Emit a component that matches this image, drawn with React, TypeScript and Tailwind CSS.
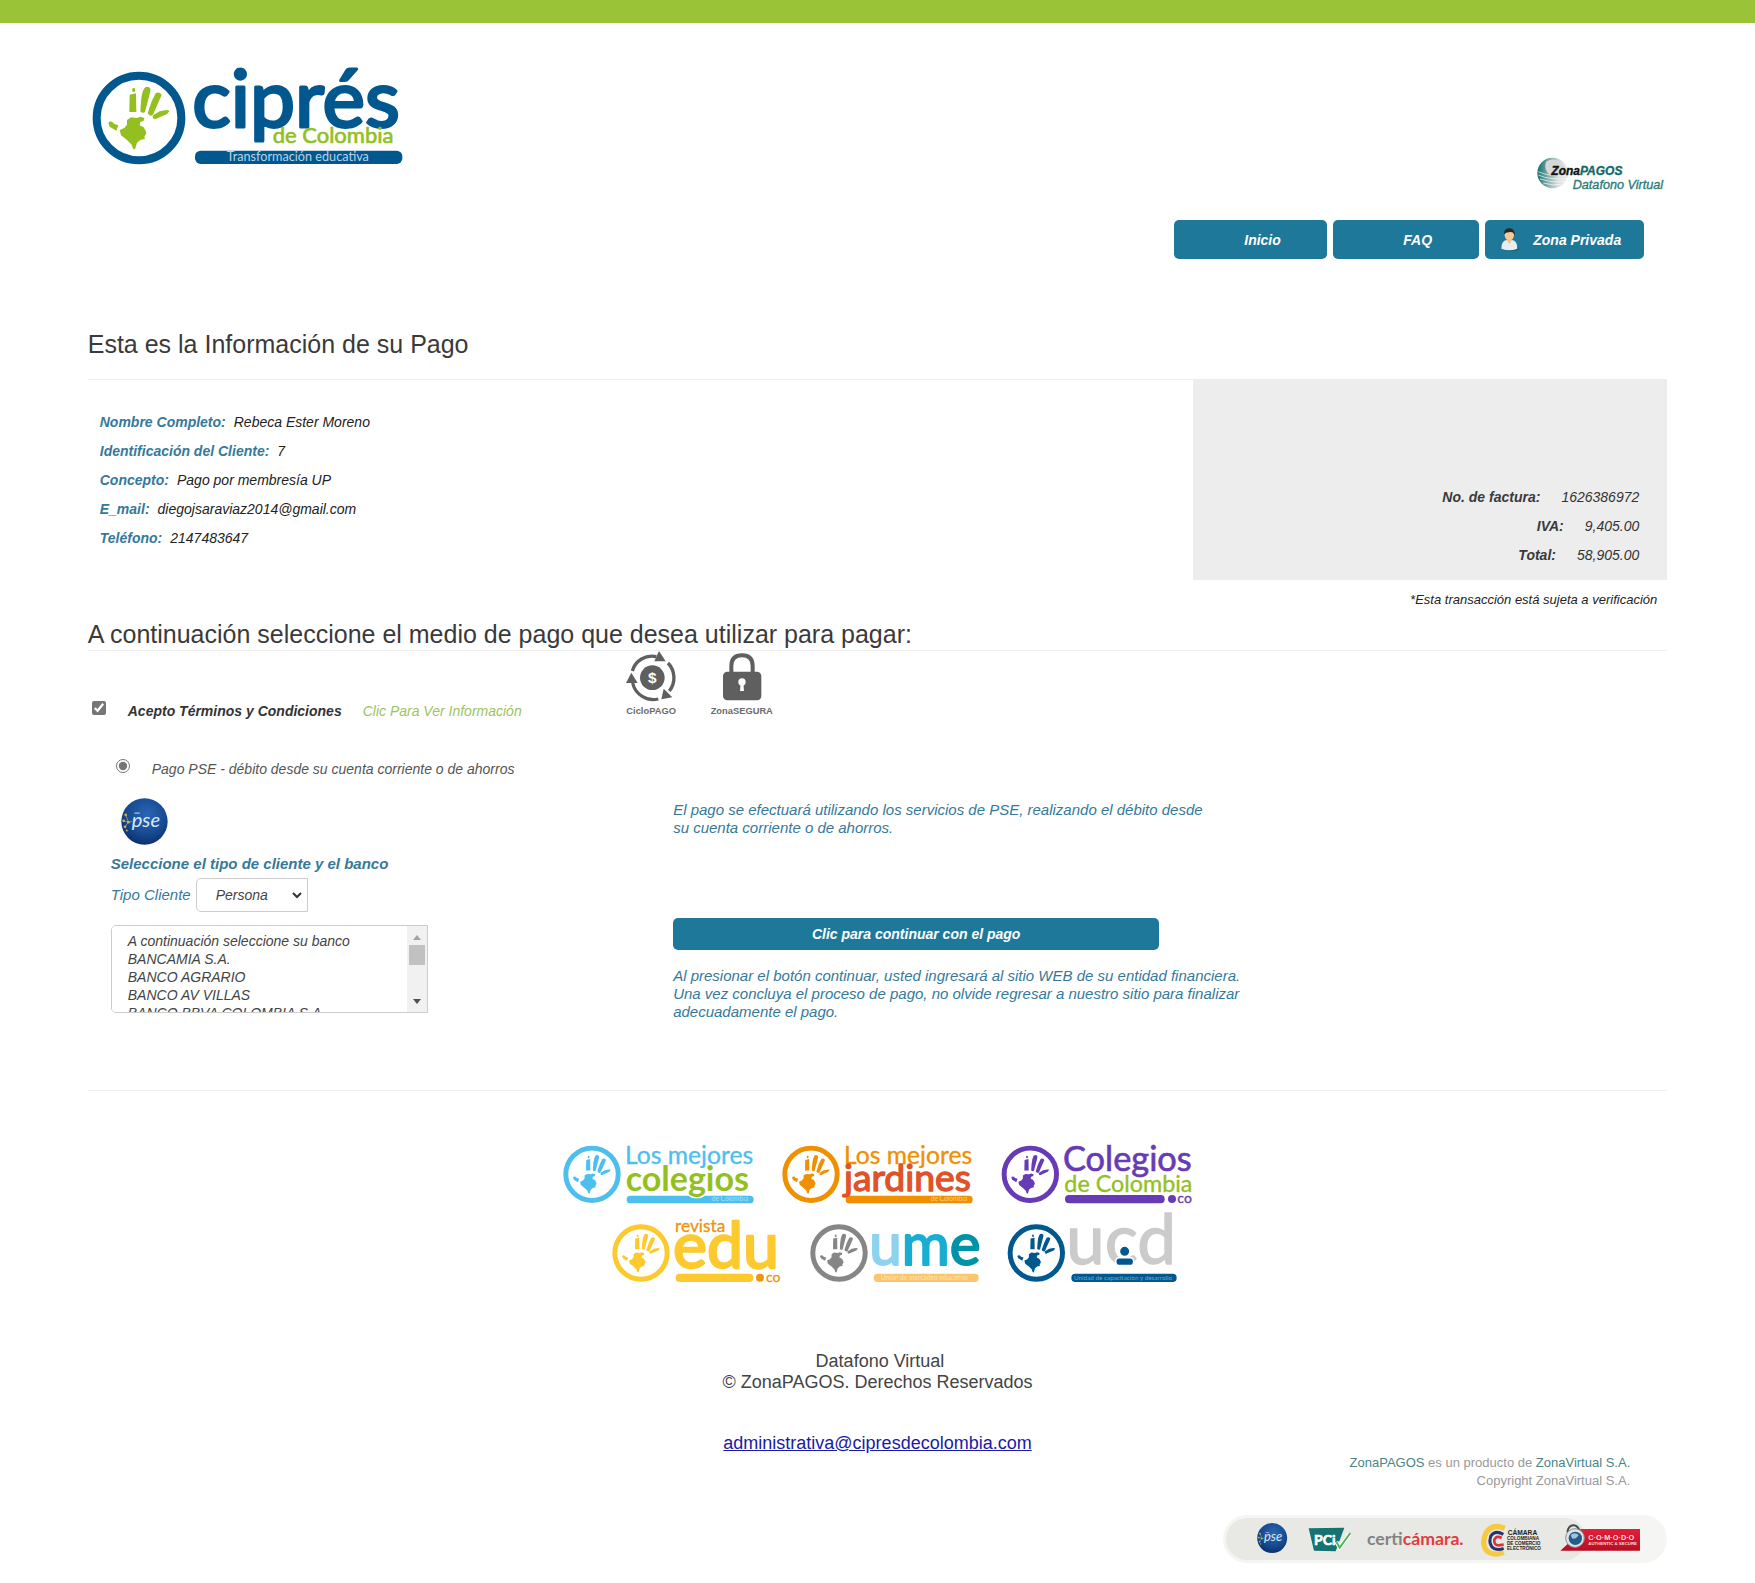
import React from "react";

const LOGO_FONT = "Lato, 'Open Sans', sans-serif";
const ARIAL = "'Liberation Sans', Arial, sans-serif";

/* Ring with an open hand whose palm is the map of Colombia, centred on (0,0), outer radius 139 */
function HandMark({ x, y, scale, ring, hand }: { x: number; y: number; scale: number; ring: string; hand: string }) {
  return (
    <g transform={`translate(${x} ${y}) scale(${scale})`}>
      <circle r="127" fill="none" stroke={ring} strokeWidth="24" />
      <g fill={hand}>
        <path d="M-28 -70 L-9 -74 L-8 -18 L-29 -18 Z" />
        <rect x="-20" y="-90" width="8" height="12" rx="3" />
        <path d="M15 -88 Q22 -98 33 -90 Q36 -86 33 -76 L18 -18 Q10 -12 4 -20 L6 -50 Q8 -76 15 -88 Z" />
        <path d="M50 -74 Q60 -80 68 -70 L65 -62 L42 -10 Q34 -2 26 -14 L38 -50 Z" />
        <path d="M82 -24 L92 -22 L84 -12 L50 3 Q38 4 42 -8 L62 -20 Z" />
        <path d="M-92 14 Q-84 6 -74 18 L-62 22 L-68 38 L-88 26 Z" />
        <path d="M-36 6 L-24 -2 L-6 0 L4 -4 L16 0 L14 8 L4 12 L2 22 L14 28 L20 38 L22 46 L16 56 L18 62 L4 66 L-6 74 L-12 94 L-18 92 L-22 80 L-36 66 L-54 52 L-58 36 L-44 30 L-36 20 Z" />
      </g>
    </g>
  );
}

type WordProps = { x: number; y: number; size: number; fill: string; weight?: number; stroke?: number; children: string };

function Word({ x, y, size, fill, weight = 400, stroke = 0, children }: WordProps) {
  return (
    <text x={x} y={y} fontSize={size} fontWeight={weight} fill={fill} stroke={fill} strokeWidth={stroke}
      strokeLinejoin="round" fontFamily={LOGO_FONT}>
      {children}
    </text>
  );
}

function CipresLogo() {
  return (
    <svg viewBox="24 54 960 300" className="h-[100px] w-[320px] overflow-visible" role="img" aria-label="Ciprés de Colombia">
      <HandMark x={177} y={204} scale={1} ring="#00588f" hand="#93c01f" />
      <Word x={337} y={230} size={241} fill="#00588f" stroke={9}>ciprés</Word>
      <Word x={578} y={280} size={66} fill="#93c01f" stroke={2}>de Colombia</Word>
      <rect x="345" y="302" width="622" height="40" rx="17" fill="#00588f" />
      <Word x={440} y={334} size={38} fill="#b9d3e6">Transformación educativa</Word>
    </svg>
  );
}

function ZonaPagosLogo() {
  return (
    <svg viewBox="1125 46 396 108" className="h-[36px] w-[132px] overflow-visible" role="img" aria-label="ZonaPAGOS Datafono Virtual">
      <defs>
        <linearGradient id="globe" x1="0" y1="0.4" x2="1" y2="0.5">
          <stop offset="0" stopColor="#0f6f70" />
          <stop offset="0.35" stopColor="#7fa9a9" />
          <stop offset="0.7" stopColor="#d5dcdc" />
          <stop offset="1" stopColor="#f0f0f0" />
        </linearGradient>
      </defs>
      <circle cx="1178" cy="100" r="46" fill="url(#globe)" />
      <path d="M1158 66 Q1185 48 1212 78 L1222 110 L1170 106 Q1150 90 1158 66 Z" fill="#d6d8d8" />
      <g fill="none" stroke="#ffffff" strokeWidth="2.5" opacity="0.8">
        <path d="M1134 96 Q1170 112 1222 108" />
        <path d="M1135 106 Q1170 122 1220 117" />
        <path d="M1140 118 Q1175 131 1214 126" />
        <path d="M1150 130 Q1178 139 1204 134" />
      </g>
      <g fontFamily={ARIAL} fontStyle="italic">
        <text x="1174" y="105" fontSize="36" fontWeight="700" fill="#111111" stroke="#111111" strokeWidth="1">
          Zona<tspan fill="#0f6b68" stroke="#0f6b68">PAGOS</tspan>
        </text>
        <text x="1238" y="149" fontSize="38" fill="#2b7a78" stroke="#2b7a78" strokeWidth="1">Datafono Virtual</text>
      </g>
    </svg>
  );
}

function UserIcon() {
  return (
    <svg viewBox="0 0 60 72" className="h-[24px] w-[20px]" aria-hidden="true">
      <ellipse cx="33" cy="62" rx="24" ry="8" fill="#14506b" opacity="0.6" />
      <path d="M4 62 Q4 38 20 36 L36 36 Q52 38 52 62 Q28 72 4 62 Z" fill="#e8edf0" />
      <path d="M20 36 L28 48 L36 36 Z" fill="#f7c08a" />
      <ellipse cx="28" cy="22" rx="14" ry="16" fill="#f9c996" />
      <path d="M12 18 Q12 1 28 1 Q46 1 44 24 Q42 12 32 12 Q20 12 12 18 Z" fill="#2e2622" />
    </svg>
  );
}

function SecurityIcons() {
  return (
    <svg viewBox="74 93 450 198" className="h-[66px] w-[150px] not-italic" role="img" aria-label="CicloPAGO y ZonaSEGURA">
      <g fill="none" stroke="#5f5f5f" strokeWidth="10">
        <path d="M96 153 A61 61 0 0 1 168 110" />
        <path d="M203 129 A64 64 0 0 1 207 213" />
        <path d="M174 237 A64 64 0 0 1 97 189" />
      </g>
      <g fill="#5f5f5f">
        <path d="M176 93 L196 124 L162 124 Z" />
        <path d="M77 189 L93 158 L112 189 Z" />
        <path d="M190 206 L216 232 L183 238 Z" />
        <circle cx="156" cy="173" r="37" />
        <rect x="368" y="155" width="115" height="86" rx="13" />
      </g>
      <path d="M393 158 V138 Q393 106 425 106 Q457 106 457 138 V158" fill="none" stroke="#5f5f5f" strokeWidth="12" />
      <circle cx="425" cy="186" r="11" fill="#fff" />
      <path d="M421 190 H429 L431 213 H419 Z" fill="#fff" />
      <g fontFamily={ARIAL} fontWeight="700">
        <text x="156" y="189" fontSize="46" fill="#fff" textAnchor="middle">$</text>
        <text x="78" y="281" fontSize="28" fill="#6b6b6b">CicloPAGO</text>
        <text x="331" y="281" fontSize="28" fill="#6b6b6b">ZonaSEGURA</text>
      </g>
    </svg>
  );
}

function PseMark({ id }: { id: string }) {
  return (
    <>
      <defs>
        <radialGradient id={id} cx="0.55" cy="0.35" r="0.7">
          <stop offset="0" stopColor="#2a66b4" />
          <stop offset="0.6" stopColor="#174a92" />
          <stop offset="1" stopColor="#0a2c66" />
        </radialGradient>
      </defs>
      <circle cx="70" cy="70" r="69" fill={`url(#${id})`} />
      <g fill="#c9b650">
        <circle cx="14" cy="50" r="4" />
        <circle cx="8" cy="68" r="4" />
        <circle cx="22" cy="72" r="4" />
        <circle cx="12" cy="86" r="4" />
        <circle cx="17" cy="97" r="3" />
      </g>
      <path d="M14 50 L22 72 L12 86 M8 68 L22 72 L32 70" fill="none" stroke="#c9b650" strokeWidth="2" />
      <rect x="40" y="43" width="16" height="4" fill="#9db9dc" />
      <text x="32" y="85" fontSize="60" fontStyle="italic" fill="#dbe7f5" fontFamily={LOGO_FONT}>pse</text>
    </>
  );
}

function PartnerLogos() {
  const tall = "h-[62px] w-[192px] overflow-visible";
  const short = "h-[70px] w-[171px] overflow-visible";
  return (
    <div className="mt-[52px] flex flex-col items-center gap-2">
      <div className="flex gap-[27px]">
        <svg viewBox="0 0 576 186" className={tall} role="img" aria-label="Los mejores colegios de Colombia">
          <HandMark x={87} y={94} scale={0.619} ring="#4dbfee" hand="#4dbfee" />
          <rect x="191" y="158" width="381" height="23" rx="11" fill="#4dbfee" />
          <Word x={186} y={63} size={74} fill="#4dbfee" stroke={1}>Los mejores</Word>
          <text x="188" y="144" fontSize="102" fontWeight="700" fontFamily={LOGO_FONT} fill="#93c01f" stroke="#ffffff" strokeWidth="8" paintOrder="stroke" strokeLinejoin="round">colegios</text>
          <Word x={446} y={175} size={20} fill="#a5e0f7">de Colombia</Word>
        </svg>
        <svg viewBox="0 0 576 186" className={tall} role="img" aria-label="Los mejores jardines de Colombia">
          <HandMark x={87} y={94} scale={0.619} ring="#f09000" hand="#f09000" />
          <rect x="191" y="158" width="381" height="23" rx="11" fill="#f09000" />
          <Word x={186} y={63} size={74} fill="#f09000" stroke={1}>Los mejores</Word>
          <Word x={186} y={144} size={112} fill="#e0532a" stroke={4}>jardines</Word>
          <Word x={446} y={175} size={20} fill="#f9cf8a">de Colombia</Word>
        </svg>
        <svg viewBox="0 0 576 186" className={tall} role="img" aria-label="Colegios de Colombia .co">
          <HandMark x={88} y={94} scale={0.619} ring="#663bb5" hand="#663bb5" />
          <rect x="192" y="156" width="299" height="25" rx="12" fill="#663bb5" />
          <circle cx="513" cy="168" r="12" fill="#663bb5" />
          <Word x={186} y={84} size={103} fill="#663bb5" stroke={2}>Colegios</Word>
          <Word x={190} y={148} size={70} fill="#93c01f" stroke={1}>de Colombia</Word>
          <Word x={529} y={180} size={42} fill="#663bb5" stroke={1}>co</Word>
        </svg>
      </div>
      <div className="flex gap-[27px] pl-9">
        <svg viewBox="0 0 513 210" className={short} role="img" aria-label="Revista edu.co">
          <HandMark x={87} y={120} scale={0.619} ring="#fcc92f" hand="#fcc92f" />
          <Word x={189} y={58} size={52} fill="#ee9410" stroke={1}>revista</Word>
          <Word x={183} y={166} size={193} fill="#fcc92f" stroke={7}>edu</Word>
          <rect x="191" y="182" width="233" height="25" rx="12" fill="#fcc92f" />
          <circle cx="444" cy="194" r="12" fill="#ee9410" />
          <Word x={462} y={206} size={42} fill="#ee9410" stroke={1}>co</Word>
        </svg>
        <svg viewBox="0 0 513 210" className={short} role="img" aria-label="ume">
          <HandMark x={87} y={120} scale={0.619} ring="#868686" hand="#868686" />
          <text x="178" y="156" fontSize="175" strokeWidth="6" strokeLinejoin="round" fontFamily={LOGO_FONT} fill="#8dd3f0" stroke="#8dd3f0">
            u<tspan fill="#18aed2" stroke="#18aed2">m</tspan><tspan fill="#0093a8" stroke="#0093a8">e</tspan>
          </text>
          <rect x="191" y="182" width="315" height="25" rx="12" fill="#fac66b" />
          <Word x={212} y={201} size={20} fill="#fde3b4">Unión de mercadeo educativo</Word>
        </svg>
        <svg viewBox="0 0 513 210" className={short} role="img" aria-label="ucd">
          <HandMark x={85} y={120} scale={0.619} ring="#00588f" hand="#00588f" />
          <Word x={174} y={154} size={208} fill="#cbcbcb" stroke={4}>ucd</Word>
          <g fill="#00588f" stroke="#ffffff" strokeWidth="5">
            <circle cx="350" cy="115" r="16" />
            <rect x="323" y="134" width="54" height="24" rx="11" />
          </g>
          <rect x="190" y="182" width="316" height="25" rx="12" fill="#00588f" />
          <Word x={198} y={201} size={19} fill="#6fa8cc">Unidad de capacitación y desarrollo</Word>
        </svg>
      </div>
    </div>
  );
}

function SecuritySeals() {
  return (
    <div className="relative mt-[25px] flex h-12 w-[444px] items-center gap-[15px] rounded-full bg-[#f5f5f3] pt-[2px] pl-[34px]">
      <span className="absolute inset-y-[3px] left-[3px] w-[360px] rounded-full bg-[#e8e9e4]" />
      <svg viewBox="0 -4 166 166" className="relative h-[36px] w-[36px]" role="img" aria-label="PSE">
        <PseMark id="pse-small" />
      </svg>
      <svg viewBox="293 249 132 108" className="relative h-[36px] w-[44px]" role="img" aria-label="PCI">
        <path d="M295 268 L402 266 L376 337 L311 335 Z" fill="#167370" />
        <text x="311" y="319" fontSize="42" fontWeight="700" fill="#fff" stroke="#fff" strokeWidth="2" fontFamily={LOGO_FONT}>PCi</text>
        <path d="M378 308 L388 326 L418 284" fill="none" stroke="#fff" strokeWidth="12" />
        <path d="M378 308 L388 326 L420 282" fill="none" stroke="#4cb85a" strokeWidth="6" />
      </svg>
      <svg viewBox="470 249 294 108" className="relative h-[36px] w-[98px]" role="img" aria-label="certicámara.">
        <g fontFamily={LOGO_FONT} fontSize="53" fontWeight="700">
          <text x="470" y="319" fill="#85837f">certi<tspan fill="#e23b3f">cámara.</tspan></text>
        </g>
      </svg>
      <svg viewBox="807 249 195 108" className="relative h-[36px] w-[65px]" role="img" aria-label="Cámara Colombiana de Comercio Electrónico">
        <g fill="none">
          <path d="M881 268 Q846 252 826 280 Q808 316 830 338 Q850 352 878 340" stroke="#f6c945" strokeWidth="16" />
          <path d="M877 286 Q852 272 839 292 Q831 318 850 329 Q864 334 878 328" stroke="#27346f" strokeWidth="9" />
          <path d="M872 297 Q856 288 850 302 Q848 318 862 319 L878 317" stroke="#d9333a" strokeWidth="8" />
        </g>
        <g fontFamily={ARIAL} fontWeight="700" fill="#1c1c1c">
          <text x="890" y="288" fontSize="20">CÁMARA</text>
          <text x="888" y="304" fontSize="14">COLOMBIANA</text>
          <text x="888" y="319" fontSize="14">DE COMERCIO</text>
          <text x="888" y="334" fontSize="14">ELECTRÓNICO</text>
        </g>
      </svg>
      <svg viewBox="1050 249 243 108" className="relative h-[36px] w-[81px]" role="img" aria-label="COMODO Authentic &amp; Secure">
        <defs>
          <linearGradient id="comodo" x1="0" y1="0" x2="0" y2="1">
            <stop offset="0" stopColor="#e2203a" />
            <stop offset="1" stopColor="#b80d22" />
          </linearGradient>
        </defs>
        <path d="M1112 270 H1290 V335 H1051 L1072 316 Z" fill="url(#comodo)" />
        <path d="M1072 280 Q1076 257 1092 259 Q1106 262 1108 276" fill="none" stroke="#4a4a4a" strokeWidth="6" />
        <circle cx="1095" cy="297" r="28" fill="#dfe3e6" stroke="#8a8f94" strokeWidth="3" />
        <circle cx="1096" cy="298" r="20" fill="#245c86" />
        <path d="M1082 288 Q1094 278 1106 288 Q1098 302 1086 298 Z" fill="#9cc6dc" />
        <g fontFamily={ARIAL} fontWeight="700" fill="#ffd9dc">
          <text x="1135" y="302" fontSize="22">C·O·M·O·D·O</text>
          <text x="1135" y="319" fontSize="13">AUTHENTIC &amp; SECURE</text>
        </g>
      </svg>
    </div>
  );
}

const customer = [
  ["Nombre Completo:", "Rebeca Ester Moreno"],
  ["Identificación del Cliente:", "7"],
  ["Concepto:", "Pago por membresía UP"],
  ["E_mail:", "diegojsaraviaz2014@gmail.com"],
  ["Teléfono:", "2147483647"],
];

const invoice = [
  ["No. de factura:", "1626386972"],
  ["IVA:", "9,405.00"],
  ["Total:", "58,905.00"],
];

const banks = [
  "A continuación seleccione su banco",
  "BANCAMIA S.A.",
  "BANCO AGRARIO",
  "BANCO AV VILLAS",
  "BANCO BBVA COLOMBIA S.A.",
  "BANCO CAJA SOCIAL",
];

function Header() {
  const button = "flex h-[39px] items-center rounded-[5px] bg-[#1e789a] pt-px text-[14px] font-bold italic text-white";
  return (
    <header className="flex items-start justify-between pt-[45px]">
      <CipresLogo />
      <div className="flex flex-col items-end pt-[87px]">
        <ZonaPagosLogo />
        <nav className="mt-[29px] mr-[23px] flex gap-[6px]">
          <button type="button" className={`${button} w-[153px] pl-[70px]`}>Inicio</button>
          <button type="button" className={`${button} w-[146px] pl-[70px]`}>FAQ</button>
          <button type="button" className={`${button} w-[159px] gap-[13px] pl-[15px]`}>
            <UserIcon />
            Zona Privada
          </button>
        </nav>
      </div>
    </header>
  );
}

function PaymentInfo() {
  return (
    <section>
      <h1 className="mt-[70px] text-[25px] leading-[30px] text-[#3a3a3a]">Esta es la Información de su Pago</h1>
      <div className="mt-5 flex text-[14px] leading-[29px] italic">
        <dl className="flex-1 border-t border-[#eeeeee] pt-[28px] pl-3">
          {customer.map(([label, value]) => (
            <div key={label} className="flex gap-2">
              <dt className="font-bold text-[#35799a]">{label}</dt>
              <dd className="text-[#222222]">{value}</dd>
            </div>
          ))}
        </dl>
        <dl className="flex min-h-[201px] w-[30%] flex-col justify-end bg-[#ededed] pr-7 pb-[10px]">
          {invoice.map(([label, value]) => (
            <div key={label} className="flex justify-end gap-[21px]">
              <dt className="font-bold text-[#3a3a3a]">{label}</dt>
              <dd className="text-[#333333]">{value}</dd>
            </div>
          ))}
        </dl>
      </div>
      <p className="mt-[10px] pr-[10px] text-right text-[13px] leading-5 text-[#222222] italic">
        *Esta transacción está sujeta a verificación
      </p>
    </section>
  );
}

function BankList() {
  return (
    <div className="mt-[13px] ml-[23px] flex h-[88px] w-[317px] overflow-hidden rounded-l-[5px] border border-[#cccccc]">
      <select
        size={5}
        aria-label="Banco"
        className="h-[86px] min-w-0 flex-1 overflow-hidden bg-white pt-[7px] pl-[14px] text-[14px] text-[#444444] italic outline-none"
      >
        {banks.map((bank) => (
          <option key={bank} className="px-[2px] pt-0 pb-[2px]">{bank}</option>
        ))}
      </select>
      <div className="flex w-[20px] flex-col items-center bg-[#f1f1f1] pt-[9px] pb-[8px]" aria-hidden="true">
        <svg viewBox="0 0 8 5" className="h-[5px] w-[8px]"><path d="M0 5 L4 0 L8 5 Z" fill="#a3a3a3" /></svg>
        <span className="mt-[5px] h-[20px] w-[16px] bg-[#c1c1c1]" />
        <svg viewBox="0 0 8 5" className="mt-auto h-[5px] w-[8px]"><path d="M0 0 L4 5 L8 0 Z" fill="#505050" /></svg>
      </div>
    </div>
  );
}

function PaymentMethod() {
  return (
    <section>
      <h2 className="mt-[9px] border-b border-[#eeeeee] pb-px text-[25px] leading-[30px] text-[#3a3a3a]">
        A continuación seleccione el medio de pago que desea utilizar para pagar:
      </h2>
      <div className="flex text-[14px] leading-5 italic">
        <div className="flex w-[34%] items-start pt-[50px] pl-1">
          <input id="terms" type="checkbox" defaultChecked className="size-[14px] accent-[#767676]" />
          <label htmlFor="terms" className="ml-[22px] font-bold text-[#333333]">Acepto Términos y Condiciones</label>
          <a href="#terminos" className="ml-[21px] text-[#9dc45f]">Clic Para Ver Información</a>
        </div>
        <SecurityIcons />
      </div>
      <div className="mt-[38px] flex items-start pl-7 text-[14px] leading-5 italic">
        <input id="pse" type="radio" name="method" defaultChecked className="size-[14px] accent-[#767676]" />
        <label htmlFor="pse" className="ml-[22px] text-[#555555]">
          Pago PSE - débito desde su cuenta corriente o de ahorros
        </label>
      </div>

      <div className="mt-[19px] flex text-[15px] text-[#35799a] italic">
        <div className="w-[37%]">
          <svg viewBox="0 0 140 140" className="ml-[33px] h-[47px] w-[47px]" role="img" aria-label="PSE">
            <PseMark id="pse-large" />
          </svg>
          <h3 className="mt-[9px] pl-[23px] leading-5 font-bold">Seleccione el tipo de cliente y el banco</h3>
          <div className="mt-1 flex items-center gap-[5px] pl-[23px]">
            <label htmlFor="client">Tipo Cliente</label>
            <div className="relative">
              <select
                id="client"
                className="h-[34px] w-[112px] appearance-none rounded-l-[5px] border border-[#cccccc] bg-white pl-[19px] text-[14px] text-[#444444] italic"
              >
                <option>Persona</option>
                <option>Empresa</option>
              </select>
              <svg viewBox="0 0 10 7" className="pointer-events-none absolute top-[14px] right-[6px] h-[7px] w-[10px]" aria-hidden="true">
                <path d="M1 1 L5 5 L9 1" fill="none" stroke="#333333" strokeWidth="2" />
              </svg>
            </div>
          </div>
          <BankList />
        </div>
        <div className="flex-1 pt-[3px] pl-px leading-[18px]">
          <p className="max-w-[545px]">
            El pago se efectuará utilizando los servicios de PSE, realizando el débito desde su cuenta corriente o de ahorros.
          </p>
          <button type="button" className="mt-[81px] block h-8 w-[486px] rounded-[5px] bg-[#1e789a] text-[14px] font-bold text-white italic">
            Clic para continuar con el pago
          </button>
          <p className="mt-[17px] max-w-[590px]">
            Al presionar el botón continuar, usted ingresará al sitio WEB de su entidad financiera. Una vez concluya el
            proceso de pago, no olvide regresar a nuestro sitio para finalizar adecuadamente el pago.
          </p>
        </div>
      </div>
    </section>
  );
}

function Footer() {
  return (
    <footer className="mt-[69px] border-t border-[#eeeeee] pb-5">
      <PartnerLogos />
      <div className="mt-[68px] text-center text-[18px] leading-[21px] text-[#444444]">
        <p className="pl-[5px]">Datafono Virtual</p>
        <p>© ZonaPAGOS. Derechos Reservados</p>
        <a href="mailto:administrativa@cipresdecolombia.com" className="mt-10 inline-block text-[#1a1aa6] underline">
          administrativa@cipresdecolombia.com
        </a>
      </div>
      <div className="flex flex-col items-end">
        <p className="pr-[37px] text-right text-[13px] leading-[18px] text-[#999999]">
          <a href="#zonapagos" className="text-[#4a8585]">ZonaPAGOS</a> es un producto de{" "}
          <a href="#zonavirtual" className="text-[#4a8585]">ZonaVirtual S.A.</a>
          <br />
          Copyright ZonaVirtual S.A.
        </p>
        <SecuritySeals />
      </div>
    </footer>
  );
}

export default function App() {
  return (
    <div className="min-h-screen bg-white font-['Liberation_Sans',Arial,sans-serif]">
      <div className="h-[23px] bg-[#9ac338]" />
      <main className="mx-auto w-[90%]">
        <Header />
        <PaymentInfo />
        <PaymentMethod />
        <Footer />
      </main>
    </div>
  );
}
